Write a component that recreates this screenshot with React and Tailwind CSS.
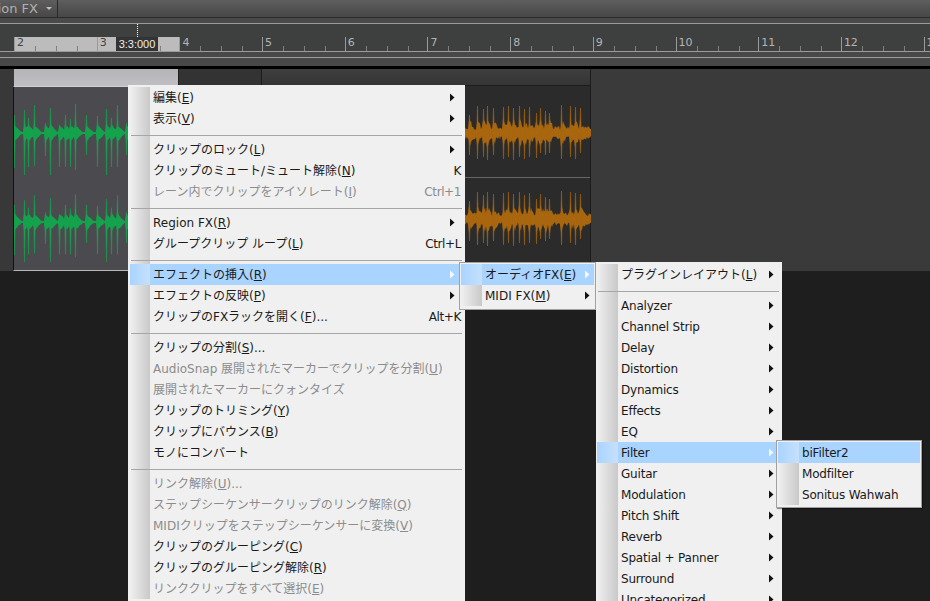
import React from "react";

const mainMenu = [
  { label: <>編集(<u>E</u>)</>, arrow: true },
  { label: <>表示(<u>V</u>)</>, arrow: true },
  { sep: true },
  { label: <>クリップのロック(<u>L</u>)</>, arrow: true },
  { label: <>クリップのミュート/ミュート解除(<u>N</u>)</>, key: "K" },
  { label: <>レーン内でクリップをアイソレート(<u>I</u>)</>, key: "Ctrl+1", off: true },
  { sep: true },
  { label: <>Region FX(<u>R</u>)</>, arrow: true },
  { label: <>グループクリップ ループ(<u>L</u>)</>, key: "Ctrl+L" },
  { sep: true },
  { label: <>エフェクトの挿入(<u>R</u>)</>, arrow: true, active: true },
  { label: <>エフェクトの反映(<u>P</u>)</>, arrow: true },
  { label: <>クリップのFXラックを開く(<u>F</u>)...</>, key: "Alt+K" },
  { sep: true },
  { label: <>クリップの分割(<u>S</u>)...</> },
  { label: <>AudioSnap 展開されたマーカーでクリップを分割(<u>U</u>)</>, off: true },
  { label: <>展開されたマーカーにクォンタイズ</>, off: true },
  { label: <>クリップのトリミング(<u>Y</u>)</> },
  { label: <>クリップにバウンス(<u>B</u>)</> },
  { label: <>モノにコンバート</> },
  { sep: true },
  { label: <>リンク解除(<u>U</u>)...</>, off: true },
  { label: <>ステップシーケンサークリップのリンク解除(<u>Q</u>)</>, off: true },
  { label: <>MIDIクリップをステップシーケンサーに変換(<u>V</u>)</>, off: true },
  { label: <>クリップのグルーピング(<u>C</u>)</> },
  { label: <>クリップのグルーピング解除(<u>R</u>)</> },
  { label: <>リンククリップをすべて選択(<u>E</u>)</>, off: true },
];

const fxMenu = [
  { label: <>オーディオFX(<u>E</u>)</>, arrow: true, active: true },
  { label: <>MIDI FX(<u>M</u>)</>, arrow: true },
];

const pluginMenu = [
  { label: <>プラグインレイアウト(<u>L</u>)</>, arrow: true },
  { sep: true },
  ...["Analyzer", "Channel Strip", "Delay", "Distortion", "Dynamics", "Effects", "EQ"].map((label) => ({ label, arrow: true })),
  { label: "Filter", arrow: true, active: true },
  ...["Guitar", "Modulation", "Pitch Shift", "Reverb", "Spatial + Panner", "Surround", "Uncategorized"].map((label) => ({ label, arrow: true })),
];

const filterMenu = [
  { label: "biFilter2", active: true },
  { label: "Modfilter" },
  { label: "Sonitus Wahwah" },
];

// [x, up, down] read off the reference clips
const greenHits = [
  [0.5, 18, 35], [10.5, 23, 42], [14.5, 15, 34], [20.5, 28, 33], [31.5, 10, 23], [36.5, 25, 42], [45.5, 8, 34], [51.5, 18, 34],
  [56.5, 14, 34], [61.5, 29, 37], [72.5, 18, 22], [83.5, 17, 34], [92.5, 24, 42], [97.5, 15, 34], [103.5, 28, 34], [112.5, 10, 22],
];
const orangeHits = [
  [4.5, 18, 22], [12.5, 27, 26], [18.5, 24, 24], [22.5, 27, 27], [28.5, 25, 22], [38.5, 26, 26], [43.5, 27, 24], [48.5, 25, 27],
  [54.5, 27, 24], [59.5, 24, 26], [64.5, 26, 24], [71.5, 20, 25], [75.5, 25, 20], [80.5, 22, 22], [84.5, 20, 20], [96.5, 28, 26],
  [105.5, 27, 24], [110.5, 26, 26], [115.5, 25, 20],
];

const wavePoints = ({ width, hits, mid, body, floor, seed, taper, spread }) => {
  let s = seed;
  const rnd = () => {
    s = (s * 9301 + 49297) % 233280;
    return s / 233280;
  };
  const top = [];
  const bottom = [];
  for (let x = 0; x <= width; x++) {
    let up = floor;
    hits.forEach(([hx]) => {
      const d = x - hx;
      if (d >= -1 && d < 8) up = Math.max(up, body * (1 - Math.abs(d) / 8));
    });
    if (taper && x > width - 12) up = Math.min(up, body * (0.35 + (0.65 * (width - x)) / 12));
    const j = 1 - spread + rnd() * spread * 2;
    top.push(`${x},${(mid - up * j).toFixed(1)}`);
    bottom.unshift(`${x},${(mid + up * (1 - spread + rnd() * spread * 2)).toFixed(1)}`);
  }
  return [...top, ...bottom].join(" ");
};

const Wave = ({ width, height, color, hits, mid, scale, ...rest }) => (
  <svg width={width} height={height} className="block">
    <polygon points={wavePoints({ width, hits, mid, ...rest })} fill={color} />
    {hits.map(([x, up, down]) => (
      <path
        key={x}
        d={`M${x - 0.8} ${mid} L${x} ${mid - up * scale} L${x + 0.8} ${mid} L${x} ${mid + down * scale} Z`}
        fill={color}
        stroke={color}
        strokeWidth="0.5"
      />
    ))}
  </svg>
);

const Arrow = ({ active }) => (
  <svg width="5" height="9" viewBox="0 0 5 9" className="shrink-0 block">
    <path d="M0 0.5 L4.5 4.5 L0 8.5 Z" fill={active ? "#f4f8ff" : "#111"} />
  </svg>
);

const MenuItems = ({ items, gutter, arrowPad }) => (
  <div className="relative">
    <div
      className="absolute top-0 bottom-0 left-0 bg-gradient-to-r from-[#f0f0f0] to-[#c9c9c9]"
      style={{ width: gutter }}
    />
    {items.map((item, i) =>
      item.sep ? (
        <div key={i} className="relative h-[10px] pt-[6px] pl-px pr-[2px]">
          <div className="h-px bg-[#a6a6a6]" />
        </div>
      ) : (
        <div
          key={i}
          className={`relative h-[21px] flex items-center pr-[3px] ${item.active ? "bg-[#a9d4ff]" : ""} ${
            item.off ? "text-[#8c8c8c]" : "text-[#1a1a1a]"
          }`}
          style={{ paddingLeft: gutter + 3 }}
        >
          {item.active && (
            <div
              className="absolute top-0 bottom-0 left-0 bg-gradient-to-r from-[#a9d4ff] to-[#c6e0fb]"
              style={{ width: gutter }}
            />
          )}
          <span className={`relative flex-1 whitespace-nowrap ${typeof item.label === "string" ? "tracking-[-0.2px]" : ""}`}>
            {item.label}
          </span>
          {item.key && <span className="whitespace-nowrap tracking-[-0.4px]">{item.key}</span>}
          {item.arrow && (
            <span style={{ paddingRight: arrowPad }}>
              <Arrow active={item.active} />
            </span>
          )}
        </div>
      )
    )}
  </div>
);

const Bar = ({ n, selected }) => (
  <div className="relative w-[82.7px] h-[14px] shrink-0 border-l border-[#9a9a9a]">
    <span className={`absolute left-[2px] top-[-1px] leading-[14px] ${selected ? "text-[#444]" : "text-[#b4b4b4]"}`}>{n}</span>
    <div className="absolute left-[20px] bottom-0 w-px h-[5px] bg-[#808080]" />
    <div className="absolute left-[41px] bottom-0 w-px h-[5px] bg-[#808080]" />
    <div className="absolute left-[62px] bottom-0 w-px h-[5px] bg-[#808080]" />
  </div>
);

const App = () => {
  return (
    <div
      className="relative w-[930px] h-[601px] overflow-hidden bg-[#1e1e1e] text-[12px]"
      style={{ fontFamily: '"DejaVu Sans", "Noto Sans CJK JP", sans-serif' }}
    >
      {/* toolbar */}
      <div className="h-[18px] bg-gradient-to-b from-[#5e5e5e] to-[#474747] border-b border-[#2a2a2a] flex">
        <div className="w-[58px] border-r border-[#2a2a2a] flex items-center justify-end pr-[5px] gap-[8px] text-[#b0b0b0] text-[13px]">
          <span className="whitespace-nowrap leading-none">ion FX</span>
          <span className="w-0 h-0 border-x-[3px] border-x-transparent border-t-[3px] border-t-[#c0c0c0]" />
        </div>
      </div>

      {/* ruler */}
      <div className="h-[5px] bg-[#4a4a4a]" />
      <div className="h-px bg-[#9c9c9c]" />
      <div className="relative h-[27px] bg-[#3e4040] pt-[13px] pl-[14px]">
        <div className="absolute left-[14px] top-[13px] w-[166px] h-[14px] bg-[#bcbcbc]" />
        <div className="relative flex text-[11px]">
          {[2, 3, 4, 5, 6, 7, 8, 9, 10, 11, 12, 13].map((n) => (
            <Bar key={n} n={n} selected={n < 4} />
          ))}
        </div>
        <div className="absolute left-[116px] top-[13px] w-[42px] h-[14px] bg-[#333] text-[#eee] text-[11px] leading-[15px] text-center font-['Liberation_Sans']">
          3:3:000
        </div>
        <div className="absolute left-[137px] top-0 h-[13px] border-l border-dotted border-white" />
      </div>
      <div className="h-px bg-[#9c9c9c]" />
      <div className="h-[5px] bg-[#484848]" />
      <div className="h-px bg-[#9c9c9c]" />
      <div className="h-[8px] bg-[#484848]" />
      <div className="h-[3px] bg-black" />

      {/* tracks */}
      <div className="flex h-[202px] bg-[#3a3a3a]">
        <div className="w-[13px] bg-[#383838]" />
        <div className="w-[165px] flex flex-col">
          <div className="h-[17px] bg-gradient-to-b from-[#b4b4b8] to-[#c0c0c4] ml-px" />
          <div className="flex-1 bg-[#4b4b4f] border-t border-b border-t-[#d0d0d0] border-b-[#b8b8b8] border-l border-l-[#111]">
            <div className="h-[89px] pt-[16px]">
              <Wave width={114} height={73} color="#14a24c" hits={greenHits} mid={30} scale={1} body={8} floor={1} spread={0.15} seed={7} />
            </div>
            <div className="pt-[16px]">
              <Wave width={114} height={73} color="#14a24c" hits={greenHits} mid={30} scale={0.95} body={8} floor={1} spread={0.15} seed={23} />
            </div>
          </div>
        </div>
        <div className="w-[83px] border-l border-[#202020] bg-[#333]" />
        <div className="w-[330px] flex flex-col border-l border-r border-[#1c1c1c]">
          <div className="h-[17px] bg-gradient-to-b from-[#3e3e3e] to-[#353535] border-b border-[#1c1c1c]" />
          <div className="flex-1 bg-[#2b2b2b] pl-[203px]">
            <div className="h-[92px] pt-[17px] border-b border-[#666]">
              <Wave width={126} height={60} color="#a8660f" hits={orangeHits} mid={30} scale={1} body={11} floor={5} spread={0.4} seed={11} taper />
            </div>
            <div className="pt-[11px]">
              <Wave width={126} height={60} color="#a8660f" hits={orangeHits} mid={30} scale={1} body={11} floor={5} spread={0.4} seed={31} taper />
            </div>
          </div>
        </div>
      </div>

      {/* context menus */}
      <div className="absolute left-[128px] top-[85px] w-[337px] h-[540px] bg-[#f0f0f0] pt-[2px] pl-[2px] pr-[1px]">
        <MenuItems items={mainMenu} gutter={20} arrowPad={6} />
      </div>
      <div className="absolute left-[459px] top-[262px] w-[137px] bg-[#f0f0f0] border border-[#a0a0a0] pt-px pb-[3px] px-px">
        <MenuItems items={fxMenu} gutter={21} arrowPad={1} />
      </div>
      <div className="absolute left-[596px] top-[262px] w-[186px] h-[360px] bg-[#f0f0f0] pt-[2px] px-px">
        <MenuItems items={pluginMenu} gutter={21} arrowPad={4} />
      </div>
      <div className="absolute left-[776px] top-[440px] w-[146px] bg-[#f0f0f0] border border-[#a0a0a0] pt-px pb-[2px] px-px shadow-[1px_1px_1px_rgba(0,0,0,0.4)]">
        <MenuItems items={filterMenu} gutter={21} />
      </div>
    </div>
  );
};

export default App;
